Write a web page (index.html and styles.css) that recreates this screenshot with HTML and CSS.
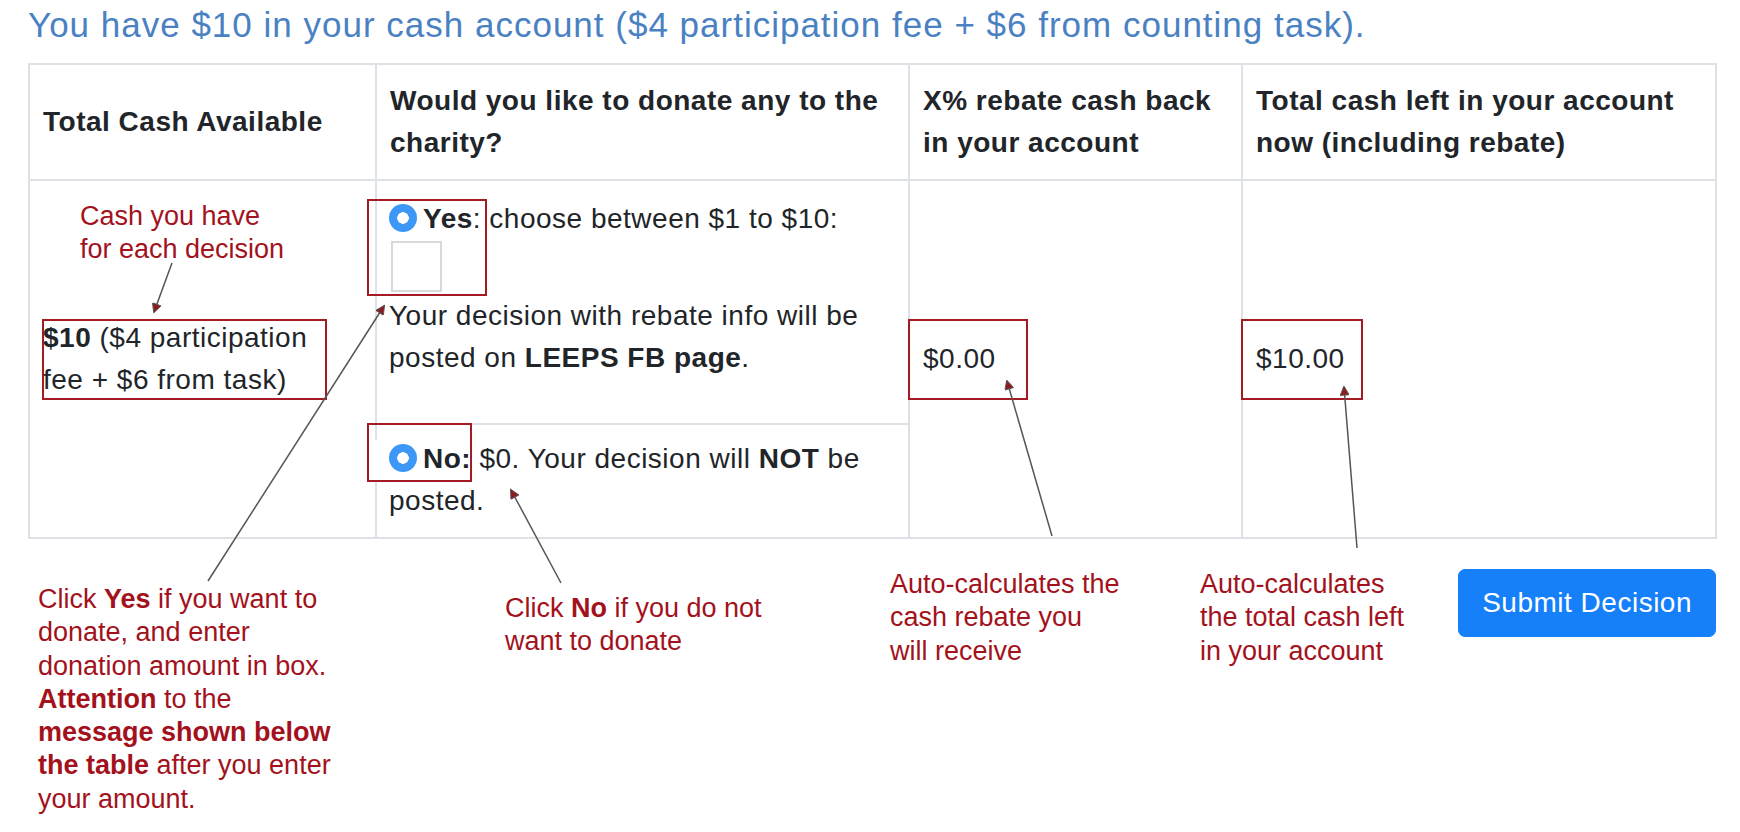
FILE: index.html
```html
<!DOCTYPE html>
<html lang="en">
<head>
<meta charset="utf-8">
<title>Donation decision</title>
<link rel="stylesheet" href="styles.css">
</head>
<body>
<div class="page">
  <h1 class="title">You have $10 in your cash account ($4 participation fee + $6 from counting task).</h1>
  <div class="grid">
    <div class="cell head">Total Cash Available</div>
    <div class="cell head">Would you like to donate any to the charity?</div>
    <div class="cell head">X% rebate cash back in your account</div>
    <div class="cell head">Total cash left in your account now (including rebate)</div>
    <div class="cell body c1"><span><b>$10</b> ($4 participation fee + $6 from task)</span></div>
    <div class="cell yes">
      <div class="choice"><span class="radio"></span><b>Yes</b>: choose between $1 to $10:</div>
      <input class="amount" type="text" aria-label="Donation amount">
      <p class="msg">Your decision with rebate info will be posted on <b>LEEPS FB page</b>.</p>
    </div>
    <div class="cell no">
      <div class="choice"><span class="radio"></span><b>No:</b> $0. Your decision will <b>NOT</b> be posted.</div>
    </div>
    <div class="cell body c3">$0.00</div>
    <div class="cell body c4">$10.00</div>
  </div>
  <div class="actions"><button class="submit" type="button">Submit Decision</button></div>

  <div class="patch"></div>
  <div class="mark mark-cash"></div>
  <div class="mark mark-yes"></div>
  <div class="mark mark-no"></div>
  <div class="mark mark-rebate"></div>
  <div class="mark mark-total"></div>

  <p class="note note-cash">Cash you have<br>for each decision</p>
  <p class="note note-yes">Click <b>Yes</b> if you want to<br>donate, and enter<br>donation amount in box.<br><b>Attention</b> to the<br><b>message shown below</b><br><b>the table</b> after you enter<br>your amount.</p>
  <p class="note note-no">Click <b>No</b> if you do not<br>want to donate</p>
  <p class="note note-rebate">Auto-calculates the<br>cash rebate you<br>will receive</p>
  <p class="note note-total">Auto-calculates<br>the total cash left<br>in your account</p>

  <svg class="arrows" viewBox="0 0 1740 832" xmlns="http://www.w3.org/2000/svg">
    <defs>
      <marker id="ah" viewBox="0 0 10 10" refX="9" refY="5" markerWidth="11" markerHeight="9" orient="auto" markerUnits="userSpaceOnUse">
        <path d="M0 0 L10 5 L0 10 z" fill="#8e1b1f" stroke="#555" stroke-width="1"/>
      </marker>
    </defs>
    <g stroke="#555" stroke-width="1.5" fill="none">
      <line x1="172" y1="263" x2="154" y2="312" marker-end="url(#ah)"/>
      <line x1="208" y1="581" x2="384" y2="306" marker-end="url(#ah)"/>
      <line x1="561" y1="583" x2="511" y2="490" marker-end="url(#ah)"/>
      <line x1="1052" y1="536" x2="1007" y2="381" marker-end="url(#ah)"/>
      <line x1="1357" y1="548" x2="1344" y2="387" marker-end="url(#ah)"/>
    </g>
  </svg>
</div>
</body>
</html>
```

FILE: styles.css
```css
* { box-sizing: border-box; }
html, body { margin: 0; background: #fff; }
body {
  font-family: "Liberation Sans", Arial, sans-serif;
  color: #212529;
  font-size: 28px;
  line-height: 42px;
  letter-spacing: 0.5px;
}
.page {
  position: relative;
  width: 1740px;
  height: 832px;
  padding: 4px 23px 0 28px;
  overflow: hidden;
}
.title {
  margin: 0;
  font-size: 35px;
  font-weight: 400;
  line-height: 42px;
  letter-spacing: 1px;
  color: #4a81c2;
  white-space: nowrap;
}
.grid {
  margin-top: 17px;
  display: grid;
  grid-template-columns: 345px 531px 331px 472px;
  gap: 2px;
  padding: 2px;
  background: #dee2e6;
}
.cell { background: #fff; }
.head {
  display: flex;
  align-items: center;
  padding: 15px 13px;
  font-weight: 700;
}
.body {
  display: flex;
  align-items: center;
  padding: 0 13px;
  grid-row: 2 / span 2;
}
.c1 { grid-column: 1; padding-right: 28px; }
.c3 { grid-column: 3; }
.c4 { grid-column: 4; }
.yes { grid-column: 2; grid-row: 2; padding: 17px 13px 16px 12px; }
.no { grid-column: 2; grid-row: 3; padding: 13px 13px 15px 12px; }
.radio {
  display: inline-block;
  width: 28px;
  height: 28px;
  border-radius: 50%;
  background: radial-gradient(circle, #fff 0 5.5px, #3d97f6 6px);
  vertical-align: -4px;
  margin-right: 6px;
}
.amount {
  display: block;
  width: 51px;
  height: 51px;
  margin: 1px 0 3px 2px;
  padding: 0;
  border: 2px solid #d9d9d9;
  background: #fff;
  font: inherit;
}
.msg { margin: 0 0 28px; }
.actions {
  display: flex;
  justify-content: flex-end;
  margin-top: 30px;
  padding-right: 1px;
}
.submit {
  font: inherit;
  letter-spacing: 0.5px;
  line-height: 42px;
  color: #fff;
  background: #1580fa;
  border: 1px solid #1580fa;
  border-radius: 7px;
  padding: 12px 23px;
}

/* annotation overlay */
.patch { position: absolute; left: 374px; top: 440px; width: 4px; height: 41px; background: #fff; }
.mark { position: absolute; border: 2px solid #a51b23; }
.mark-cash { left: 42px; top: 319px; width: 285px; height: 81px; }
.mark-yes { left: 367px; top: 199px; width: 120px; height: 97px; }
.mark-no { left: 367px; top: 423px; width: 105px; height: 59px; }
.mark-rebate { left: 908px; top: 319px; width: 120px; height: 81px; }
.mark-total { left: 1241px; top: 319px; width: 122px; height: 81px; }
.note {
  position: absolute;
  margin: 0;
  font-size: 27px;
  line-height: 33.3px;
  letter-spacing: 0;
  color: #a3121c;
  white-space: nowrap;
}
.note b { font-weight: 700; }
.note-cash { left: 80px; top: 200px; line-height: 33px; }
.note-yes { left: 38px; top: 583px; }
.note-no { left: 505px; top: 592px; }
.note-rebate { left: 890px; top: 568px; }
.note-total { left: 1200px; top: 568px; }
.arrows { position: absolute; left: 0; top: 0; width: 1740px; height: 832px; pointer-events: none; }
```
